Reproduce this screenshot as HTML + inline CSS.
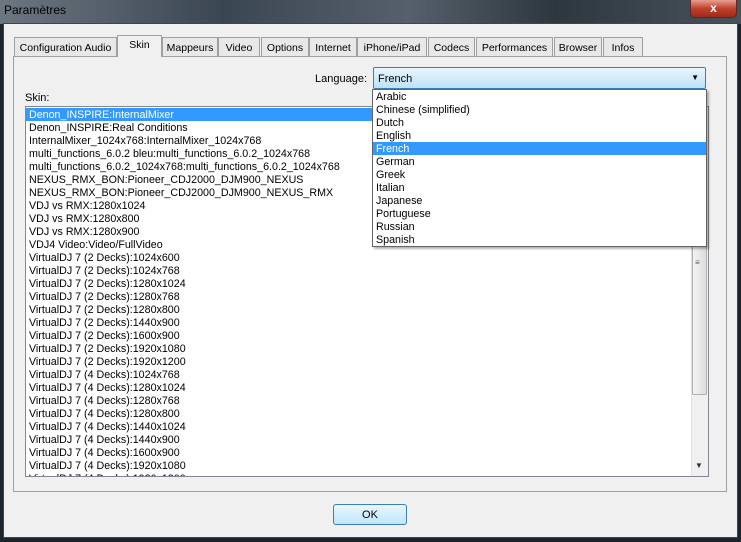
<!DOCTYPE html>
<html><head><meta charset="utf-8"><style>
*{margin:0;padding:0;box-sizing:border-box}
body{width:741px;height:542px;overflow:hidden;background:#1c232a;font-family:"Liberation Sans",sans-serif;font-size:11px;color:#000;position:relative}
.title{position:absolute;left:0;top:0;width:741px;height:24px;background:linear-gradient(90deg,#6c7680 0%,#3a4650 30%,#55606a 55%,#2d3740 75%,#48525c 100%)}
.title span{position:absolute;left:4px;top:3px;font-size:12px;color:#000}
.close{position:absolute;left:690px;top:0;width:47px;height:18px;background:linear-gradient(#e8a090,#c0402c 50%,#a02a18);border:1px solid #5a2a20;border-top:none;border-radius:0 0 5px 5px;color:#fff;font-weight:bold;text-align:center;font-size:12px;line-height:16px}
.dlg{position:absolute;left:3px;top:23px;width:735px;height:515px;background:#f0f0f0;border:1px solid #444}
.a{position:absolute}
.tab{position:absolute;top:37px;height:19px;background:#e8e8e8;border:1px solid #a0a0a0;border-bottom:none;font-size:10.5px;padding-top:4px;text-align:center;white-space:nowrap}
.panel{position:absolute;left:13px;top:56px;width:714px;height:436px;border:1px solid #a0a0a0;background:#f0f0f0}
.list{position:absolute;left:25px;top:106px;width:684px;height:371px;background:#fff;border:1px solid #828790;overflow:hidden;padding-top:1px}
.list div{height:13px;line-height:14px;padding-left:3px;font-size:10.7px;white-space:nowrap}
.sel{background:#3399ff;color:#fff}
.sb{position:absolute;left:691px;top:107px;width:17px;height:369px;background:#f0f0f0;border-left:1px solid #e0e0e0}
.combo{position:absolute;left:373px;top:67px;width:333px;height:22px;border:1px solid #3c7fb1;border-radius:2px;background:linear-gradient(#e9f5fd,#bde2f7);font-size:11px;padding:5px 4px 0}
.dd{position:absolute;left:372px;top:89px;width:335px;height:158px;background:#fff;border:1px solid #646464;box-shadow:2px 2px 2px rgba(0,0,0,.3);padding-top:0}
.dd div{height:13px;line-height:14px;padding-left:3px;font-size:10.7px}
.ok{position:absolute;left:333px;top:504px;width:74px;height:21px;border:1px solid #3c7fb1;border-radius:3px;background:linear-gradient(#eaf6fd,#bee6fd);text-align:center;line-height:20px;font-size:11px}
</style></head><body>
<div class="title"><span>Paramètres</span></div>
<div class="close">x</div>
<div class="dlg"></div>
<div class="tab" style="left:14px;width:103px">Configuration Audio</div>
<div class="tab" style="left:117px;top:35px;height:22px;width:45px;background:#f0f0f0;z-index:2;padding-top:3px">Skin</div>
<div class="tab" style="left:162px;width:56px">Mappeurs</div>
<div class="tab" style="left:218px;width:42px">Video</div>
<div class="tab" style="left:261px;width:48px">Options</div>
<div class="tab" style="left:309px;width:48px">Internet</div>
<div class="tab" style="left:357px;width:70px">iPhone/iPad</div>
<div class="tab" style="left:428px;width:47px">Codecs</div>
<div class="tab" style="left:476px;width:77px">Performances</div>
<div class="tab" style="left:554px;width:48px">Browser</div>
<div class="tab" style="left:603px;width:40px">Infos</div>
<div class="panel"></div>
<div class="a" style="left:315px;top:73px;font-size:11px">Language:</div>
<div class="a" style="left:25px;top:92px;font-size:11px">Skin:</div>
<div class="list">
<div class="sel">Denon_INSPIRE:InternalMixer</div>
<div>Denon_INSPIRE:Real Conditions</div>
<div>InternalMixer_1024x768:InternalMixer_1024x768</div>
<div>multi_functions_6.0.2 bleu:multi_functions_6.0.2_1024x768</div>
<div>multi_functions_6.0.2_1024x768:multi_functions_6.0.2_1024x768</div>
<div>NEXUS_RMX_BON:Pioneer_CDJ2000_DJM900_NEXUS</div>
<div>NEXUS_RMX_BON:Pioneer_CDJ2000_DJM900_NEXUS_RMX</div>
<div>VDJ vs RMX:1280x1024</div>
<div>VDJ vs RMX:1280x800</div>
<div>VDJ vs RMX:1280x900</div>
<div>VDJ4 Video:Video/FullVideo</div>
<div>VirtualDJ 7 (2 Decks):1024x600</div>
<div>VirtualDJ 7 (2 Decks):1024x768</div>
<div>VirtualDJ 7 (2 Decks):1280x1024</div>
<div>VirtualDJ 7 (2 Decks):1280x768</div>
<div>VirtualDJ 7 (2 Decks):1280x800</div>
<div>VirtualDJ 7 (2 Decks):1440x900</div>
<div>VirtualDJ 7 (2 Decks):1600x900</div>
<div>VirtualDJ 7 (2 Decks):1920x1080</div>
<div>VirtualDJ 7 (2 Decks):1920x1200</div>
<div>VirtualDJ 7 (4 Decks):1024x768</div>
<div>VirtualDJ 7 (4 Decks):1280x1024</div>
<div>VirtualDJ 7 (4 Decks):1280x768</div>
<div>VirtualDJ 7 (4 Decks):1280x800</div>
<div>VirtualDJ 7 (4 Decks):1440x1024</div>
<div>VirtualDJ 7 (4 Decks):1440x900</div>
<div>VirtualDJ 7 (4 Decks):1600x900</div>
<div>VirtualDJ 7 (4 Decks):1920x1080</div>
<div>VirtualDJ 7 (4 Decks):1920x1200</div>
</div>
<div class="sb"></div>
<div class="a" style="left:692px;top:245px;width:15px;height:150px;background:linear-gradient(90deg,#f4f4f4,#dcdcdc);border:1px solid #b0b0b0;border-radius:2px"></div>
<div class="a" style="left:695px;top:258px;font-size:8px;color:#555">≡</div>
<div class="a" style="left:695px;top:461px;font-size:8px;color:#333">▼</div>
<div class="combo">French<span style="position:absolute;right:6px;top:5px;font-size:8px">▼</span></div>
<div class="dd">
<div>Arabic</div><div>Chinese (simplified)</div><div>Dutch</div><div>English</div>
<div class="sel">French</div><div>German</div><div>Greek</div><div>Italian</div>
<div>Japanese</div><div>Portuguese</div><div>Russian</div><div>Spanish</div>
</div>
<div class="ok">OK</div>
</body></html>
